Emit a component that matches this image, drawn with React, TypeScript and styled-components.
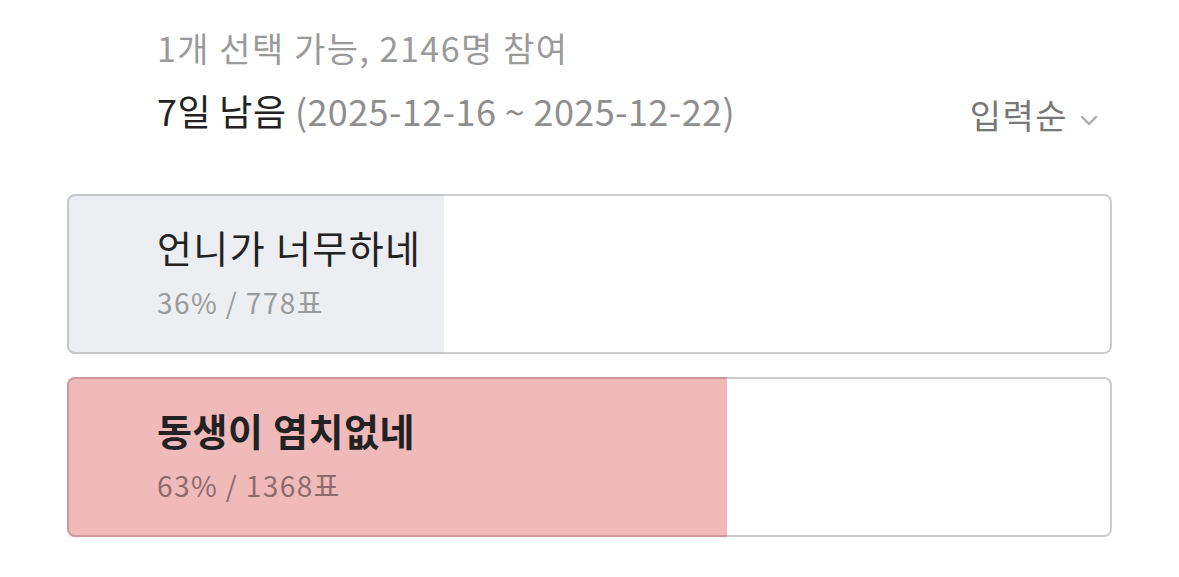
import React from "react";
import styled, { createGlobalStyle } from "styled-components";

const GlobalStyle = createGlobalStyle`
  html, body {
    margin: 0;
    padding: 0;
    background: #fff;
  }
  body {
    font-family: "Noto Sans CJK KR", "Noto Sans", sans-serif;
    -webkit-font-smoothing: antialiased;
  }
`;

const Page = styled.div`
  width: 1179px;
  height: 577px;
  box-sizing: border-box;
  padding: 24px 67px 0 67px;
`;

const Header = styled.div`
  padding-left: 90px;
  padding-right: 14px;
`;

const Meta = styled.div`
  font-size: 34px;
  line-height: 48px;
  color: #9a9a9a;
  letter-spacing: 1.5px;
`;

const InfoRow = styled.div`
  display: flex;
  align-items: baseline;
  justify-content: space-between;
  margin-top: 14px;
`;

const Remain = styled.div`
  font-size: 36px;
  line-height: 48px;
  color: #222;
  letter-spacing: 0.4px;
`;

const Period = styled.span`
  color: #8e8e8e;
`;

const Sort = styled.button`
  display: flex;
  align-items: center;
  gap: 12px;
  border: 0;
  background: none;
  padding: 0;
  font-family: inherit;
  font-size: 34px;
  line-height: 48px;
  letter-spacing: 1.5px;
  color: #777;
  transform: translateY(3px);
  svg {
    margin-top: 10px;
  }
`;

const List = styled.div`
  display: flex;
  flex-direction: column;
  gap: 23px;
  margin-top: 58px;
`;

const Card = styled.div`
  position: relative;
  height: 160px;
  box-sizing: border-box;
  border: 2px solid #cdcdcd;
  border-radius: 8px;
  background: #fff;
`;

const Fill = styled.div<{ $picked?: boolean }>`
  position: absolute;
  left: -2px;
  top: -2px;
  bottom: -2px;
  border-radius: 8px 0 0 8px;
  background: ${(p) =>
    p.$picked ? "rgba(214, 56, 56, 0.35)" : "rgba(170, 176, 196, 0.22)"};
`;

const Body = styled.div`
  position: relative;
  padding: 25px 0 0 88px;
`;

const Title = styled.div<{ $picked?: boolean }>`
  font-size: 38px;
  line-height: 52px;
  color: #222;
  font-weight: ${(p) => (p.$picked ? 700 : 400)};
  letter-spacing: ${(p) => (p.$picked ? "0.6px" : "1.4px")};
`;

const Count = styled.div<{ $picked?: boolean }>`
  margin-top: 9px;
  font-size: 28px;
  line-height: 40px;
  color: ${(p) => (p.$picked ? "#8d6b6b" : "#9a9a9a")};
  letter-spacing: 1.4px;
`;

const options = [
  { label: "언니가 너무하네", pct: 36, votes: 778, fill: 36, picked: false },
  { label: "동생이 염치없네", pct: 63, votes: 1368, fill: 63.2, picked: true },
];

export default function App() {
  return (
    <>
      <GlobalStyle />
      <Page>
        <Header>
          <Meta>1개 선택 가능, 2146명 참여</Meta>
          <InfoRow>
            <Remain>
              7일 남음 <Period>(2025-12-16 ~ 2025-12-22)</Period>
            </Remain>
            <Sort>
              입력순
              <svg width="18" height="11" viewBox="0 0 18 11" fill="none">
                <path
                  d="M2 2l7 7 7-7"
                  stroke="#aaa"
                  strokeWidth="2.4"
                  strokeLinecap="round"
                  strokeLinejoin="round"
                />
              </svg>
            </Sort>
          </InfoRow>
        </Header>
        <List>
          {options.map((o) => (
            <Card key={o.label}>
              <Fill $picked={o.picked} style={{ width: `calc(${o.fill}% + 2px)` }} />
              <Body>
                <Title $picked={o.picked}>{o.label}</Title>
                <Count $picked={o.picked}>
                  {o.pct}% / {o.votes}표
                </Count>
              </Body>
            </Card>
          ))}
        </List>
      </Page>
    </>
  );
}
